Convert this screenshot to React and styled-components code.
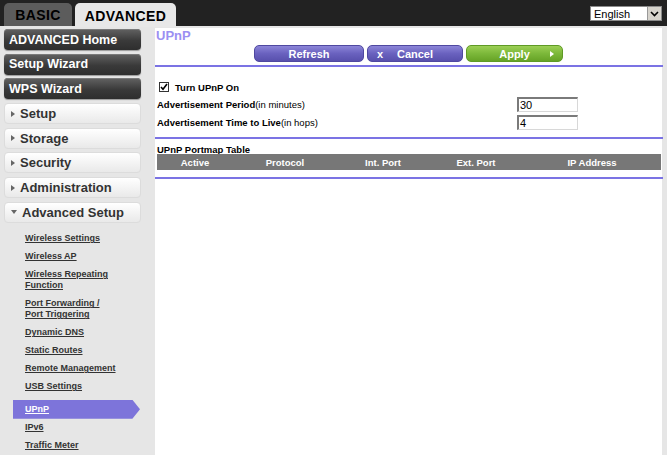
import React from "react";
import styled, { createGlobalStyle } from "styled-components";

const Global = createGlobalStyle`
  html, body { margin: 0; padding: 0; }
  body {
    background: #e6e6e6;
    font-family: "Liberation Sans", Arial, sans-serif;
    width: 667px;
    height: 455px;
    overflow: hidden;
  }
`;

const Page = styled.div`
  width: 667px;
  height: 455px;
  display: flex;
  flex-direction: column;
`;

const TopBar = styled.div`
  height: 26px;
  background: #222;
  display: flex;
  align-items: flex-end;
  padding-left: 4px;
  position: relative;
  flex-shrink: 0;
`;

const Tab = styled.div`
  height: ${(p) => (p.$active ? 24 : 23)}px;
  margin-bottom: ${(p) => (p.$active ? -1 : 0)}px;
  width: ${(p) => p.$w}px;
  margin-right: 3px;
  border-radius: 5px 5px 0 0;
  background: ${(p) => (p.$active ? "#e8e8e8" : "#5c5c5c")};
  color: #000;
  font-weight: bold;
  font-size: 14px;
  letter-spacing: 0.4px;
  display: flex;
  align-items: center;
  justify-content: center;
  box-sizing: border-box;
  padding-top: 1px;
`;

const LangSelect = styled.div`
  position: absolute;
  right: 5px;
  top: 6px;
  width: 72px;
  height: 15px;
  background: #fff;
  border: 1px solid #8a8a8a;
  box-sizing: border-box;
  display: flex;
  align-items: center;
  font-size: 11px;
  color: #000;
  padding-left: 3px;
  justify-content: space-between;
`;

const DropBtn = styled.div`
  width: 13px;
  height: 13px;
  background: #d6d3cc;
  border-left: 1px solid #999;
  display: flex;
  align-items: center;
  justify-content: center;
`;

const Main = styled.div`
  flex: 1;
  display: flex;
  padding-top: 2px;
  min-height: 0;
`;

const Sidebar = styled.div`
  width: 155px;
  flex-shrink: 0;
  padding: 1px 0 0 4px;
  box-sizing: border-box;
  display: flex;
  flex-direction: column;
`;

const Buttons = styled.div`
  display: flex;
  flex-direction: column;
  gap: 3.7px;
`;

const DarkBtn = styled.div`
  width: 137px;
  height: 21px;
  box-sizing: border-box;
  border-radius: 4px;
  background: linear-gradient(#626262, #3a3a3a 55%, #2e2e2e);
  box-shadow: inset 0 1px 0 #7a7a7a, 0 1px 1px #999;
  color: #fff;
  font-weight: bold;
  font-size: 12.5px;
  display: flex;
  align-items: center;
  padding-left: 5px;
`;

const LightBtn = styled.div`
  width: 137px;
  height: 21px;
  box-sizing: border-box;
  border-radius: 4px;
  background: linear-gradient(#ffffff, #f4f4f4 50%, #e9e9e9);
  border: 1px solid #dcdcdc;
  color: #333;
  font-weight: bold;
  font-size: 13px;
  display: flex;
  align-items: center;
  padding-left: 6px;
  gap: 5px;
`;

const Arrow = styled.span`
  width: 0;
  height: 0;
  ${(p) =>
    p.$down
      ? `border-left: 3px solid transparent; border-right: 3px solid transparent; border-top: 4px solid #666;`
      : `border-top: 3px solid transparent; border-bottom: 3px solid transparent; border-left: 4px solid #666;`}
`;

const SubMenu = styled.div`
  margin-top: 7px;
  display: flex;
  flex-direction: column;
`;

const SubItem = styled.a`
  display: block;
  padding: 3.5px 0 3.5px 21px;
  line-height: 11px;
  font-size: 9px;
  font-weight: bold;
  color: #333;
  text-decoration: underline;
  width: 110px;
`;

const SubItemActive = styled(SubItem)`
  margin: 4px 0 0 9px;
  padding: 4px 0 4px 12px;
  width: 127px;
  box-sizing: border-box;
  color: #fff;
  background: #7d74da;
  clip-path: polygon(0 0, 94% 0, 100% 50%, 94% 100%, 0 100%);
`;

const Content = styled.div`
  width: 507px;
  background: #fff;
  display: flex;
  flex-direction: column;
  padding-left: 1px;
  box-sizing: border-box;
`;

const Title = styled.div`
  color: #9b8ff2;
  font-weight: bold;
  font-size: 13px;
  line-height: 15px;
`;

const BtnRow = styled.div`
  margin-top: 2px;
  display: flex;
  justify-content: center;
  gap: 3px;
  padding-right: 1px;
`;

const ActionBtn = styled.div`
  width: ${(p) => p.$w}px;
  height: 17px;
  border-radius: 5px;
  box-sizing: border-box;
  background: ${(p) =>
    p.$green
      ? "linear-gradient(#9ccf55, #7cb83a 50%, #66a326)"
      : "linear-gradient(#8c85d8, #6a62bf 50%, #5850ad)"};
  border: 1px solid ${(p) => (p.$green ? "#5f9a25" : "#4f48a0")};
  color: #fff;
  font-weight: bold;
  font-size: 11px;
  display: flex;
  align-items: center;
  justify-content: center;
  position: relative;
`;

const BtnIcon = styled.span`
  position: absolute;
  left: ${(p) => p.$l}px;
  top: 50%;
  transform: translateY(-50%);
  font-size: 11px;
  font-weight: bold;
`;

const BtnTri = styled.span`
  position: absolute;
  right: 8px;
  top: 50%;
  margin-top: -3px;
  border-top: 3px solid transparent;
  border-bottom: 3px solid transparent;
  border-left: 4px solid #fff;
`;

const Rule = styled.div`
  height: 2px;
  background: #7b73e4;
  margin-top: ${(p) => p.$mt}px;
  width: 508px;
  margin-left: -1px;
`;

const CheckRow = styled.label`
  margin-top: 11px;
  height: 18px;
  display: flex;
  align-items: center;
  gap: 6px;
  padding-left: 3px;
  font-size: 9.5px;
  font-weight: bold;
  color: #000;
`;

const Check = styled.span`
  width: 10px;
  height: 10px;
  box-sizing: border-box;
  border: 1px solid #333;
  background: #fff;
  display: flex;
  align-items: center;
  justify-content: center;
`;

const FormRow = styled.div`
  height: 17px;
  display: flex;
  align-items: center;
  font-size: 9.5px;
  color: #000;
  margin-top: ${(p) => p.$mt || 0}px;
`;

const Label = styled.div`
  width: 360px;
  padding-left: 1px;
  b { font-weight: bold; }
`;

const Input = styled.div`
  width: 61px;
  height: 15px;
  box-sizing: border-box;
  border-top: 2px solid #7a7a7a;
  border-left: 2px solid #7a7a7a;
  border-right: 1px solid #d8d8d8;
  border-bottom: 1px solid #d8d8d8;
  font-size: 11px;
  line-height: 12px;
  padding-left: 1px;
  background: #fff;
`;

const TableTitle = styled.div`
  margin-top: 6px;
  padding-left: 1px;
  font-size: 9.5px;
  font-weight: bold;
  line-height: 9px;
`;

const TableHead = styled.div`
  margin-left: 1px;
  width: 504px;
  height: 16px;
  background: #777;
  display: grid;
  grid-template-columns: 76px 104px 92px 94px 1fr;
  align-items: center;
  color: #fff;
  font-weight: bold;
  font-size: 9.5px;
`;

const HeadCell = styled.div`
  text-align: center;
`;

export default function App() {
  const items = [
    ["Wireless Settings"],
    ["Wireless AP"],
    ["Wireless Repeating", "Function"],
    ["Port Forwarding /", "Port Triggering"],
    ["Dynamic DNS"],
    ["Static Routes"],
    ["Remote Management"],
    ["USB Settings"],
  ];
  return (
    <Page>
      <Global />
      <TopBar>
        <Tab $w={68}>BASIC</Tab>
        <Tab $w={101} $active>ADVANCED</Tab>
        <LangSelect>
          <span>English</span>
          <DropBtn>
            <svg width="9" height="6" viewBox="0 0 9 6">
              <path d="M1 1 L4.5 4.5 L8 1" stroke="#000" strokeWidth="1.6" fill="none" />
            </svg>
          </DropBtn>
        </LangSelect>
      </TopBar>
      <Main>
        <Sidebar>
          <Buttons>
            <DarkBtn>ADVANCED Home</DarkBtn>
            <DarkBtn>Setup Wizard</DarkBtn>
            <DarkBtn>WPS Wizard</DarkBtn>
            <LightBtn><Arrow />Setup</LightBtn>
            <LightBtn><Arrow />Storage</LightBtn>
            <LightBtn><Arrow />Security</LightBtn>
            <LightBtn><Arrow />Administration</LightBtn>
            <LightBtn><Arrow $down />Advanced Setup</LightBtn>
          </Buttons>
          <SubMenu>
            {items.map((it) => (
              <SubItem key={it[0]}>
                {it[0]}
                {it[1] && <br />}
                {it[1]}
              </SubItem>
            ))}
            <SubItemActive>UPnP</SubItemActive>
            <SubItem>IPv6</SubItem>
            <SubItem>Traffic Meter</SubItem>
          </SubMenu>
        </Sidebar>
        <Content>
          <Title>UPnP</Title>
          <BtnRow>
            <ActionBtn $w={110}>Refresh</ActionBtn>
            <ActionBtn $w={96}>
              <BtnIcon $l={9}>x</BtnIcon>Cancel
            </ActionBtn>
            <ActionBtn $w={97} $green>
              Apply
              <BtnTri />
            </ActionBtn>
          </BtnRow>
          <Rule $mt={3} />
          <CheckRow>
            <Check>
              <svg width="8" height="8" viewBox="0 0 8 8">
                <path d="M1 4 L3 6.3 L7 1" stroke="#000" strokeWidth="1.6" fill="none" />
              </svg>
            </Check>
            Turn UPnP On
          </CheckRow>
          <FormRow>
            <Label><b>Advertisement Period</b>(in minutes)</Label>
            <Input>30</Input>
          </FormRow>
          <FormRow $mt={1}>
            <Label><b>Advertisement Time to Live</b>(in hops)</Label>
            <Input>4</Input>
          </FormRow>
          <Rule $mt={6} />
          <TableTitle>UPnP Portmap Table</TableTitle>
          <TableHead>
            <HeadCell>Active</HeadCell>
            <HeadCell>Protocol</HeadCell>
            <HeadCell>Int. Port</HeadCell>
            <HeadCell>Ext. Port</HeadCell>
            <HeadCell>IP Address</HeadCell>
          </TableHead>
          <Rule $mt={7} />
        </Content>
      </Main>
    </Page>
  );
}
